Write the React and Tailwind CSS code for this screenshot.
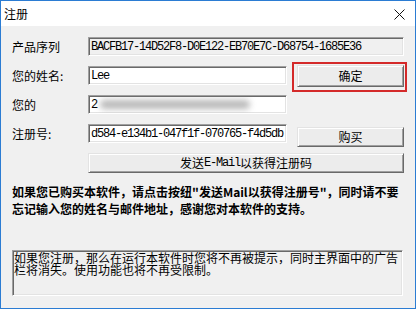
import React from "react";

const cjk = { fontFamily: '"Noto Sans CJK SC", "Noto Sans", sans-serif' };
const mono = { fontFamily: '"Liberation Mono", "Noto Sans CJK SC", monospace' };

function Sunken({ className = "", children }) {
  return (
    <div
      className={
        "h-[19px] box-border border border-t-[#a0a0a0] border-l-[#a0a0a0] border-b-white border-r-white shadow-[inset_1px_1px_0_#696969,inset_-1px_-1px_0_#e3e3e3] flex items-center pl-[2px] overflow-hidden text-[12px] tracking-[-1.2px] text-black " +
        className
      }
      style={mono}
    >
      {children}
    </div>
  );
}

function Raised({ className = "", children }) {
  return (
    <div
      className={
        "box-border border border-t-[#e3e3e3] border-l-[#e3e3e3] border-b-[#696969] border-r-[#696969] shadow-[inset_1px_1px_0_#ffffff,inset_-1px_-1px_0_#a0a0a0] bg-[#ececec] flex items-center justify-center text-[12px] text-black " +
        className
      }
      style={cjk}
    >
      {children}
    </div>
  );
}

function Label({ children }) {
  return (
    <div className="w-[76px] shrink-0 text-[12px] leading-[19px] text-black" style={cjk}>
      {children}
    </div>
  );
}

export default function App() {
  return (
    <div className="w-[416px] h-[309px] box-border border border-[#2b7cd3] flex flex-col bg-[#f0f0f0] overflow-hidden">
      <div className="h-[25px] bg-white flex items-center justify-between pl-[3px] pr-[10px] shrink-0">
        <span className="text-[12px] text-black" style={cjk}>注册</span>
        <svg width="11" height="11" viewBox="0 0 11 11" className="mt-[1px]">
          <path d="M0.5 0.5 L10.5 10.5 M10.5 0.5 L0.5 10.5" stroke="#111" strokeWidth="1" fill="none" />
        </svg>
      </div>
      <div className="flex-1 flex flex-col pl-[11px] pr-[11px] pt-[11px]">
        <div className="flex items-center h-[19px]">
          <Label>产品序列</Label>
          <Sunken className="w-[316px] bg-[#f0f0f0]">BACFB17-14D52F8-D0E122-EB70E7C-D68754-1685E36</Sunken>
        </div>
        <div className="flex items-center h-[19px] mt-[10px]">
          <Label>您的姓名:</Label>
          <Sunken className="w-[199px] bg-white">Lee</Sunken>
          <div className="relative ml-[10px]">
            <Raised className="w-[107px] h-[22px]">确定</Raised>
            <div className="absolute left-[-5px] top-[-3px] w-[115px] h-[30px] border-2 border-[#d42a2a] pointer-events-none" />
          </div>
        </div>
        <div className="flex items-center h-[19px] mt-[10px]">
          <Label>您的</Label>
          <Sunken className="w-[199px] bg-white">
            <span>2</span>
            <span className="ml-[3px] w-[150px] h-[9px] bg-[#9a9a9a] blur-[3px] opacity-70 rounded-full" />
          </Sunken>
        </div>
        <div className="flex items-start h-[19px] mt-[10px]">
          <Label>注册号:</Label>
          <Sunken className="w-[199px] bg-white">d584-e134b1-047f1f-070765-f4d5db</Sunken>
          <Raised className="w-[107px] h-[20px] ml-[10px] mt-[3px]">购买</Raised>
        </div>
        <Raised className="ml-[76px] w-[316px] h-[20px] mt-[10px]">
          <span>发送</span>
          <span style={mono} className="tracking-[-1.2px]">E-Mail</span>
          <span>以获得注册码</span>
        </Raised>
        <div className="mt-[10px] text-[12px] leading-[17px] font-bold text-black" style={cjk}>
          如果您已购买本软件，请点击按纽"发送Mail以获得注册号"，同时请不要忘记输入您的姓名与邮件地址，感谢您对本软件的支持。
        </div>
        <div
          className="mt-[33px] w-[391px] h-[46px] box-border border border-t-[#a0a0a0] border-l-[#a0a0a0] border-b-white border-r-white shadow-[inset_1px_1px_0_#696969,inset_-1px_-1px_0_#e3e3e3] pl-[1px] pt-[1px] text-[12px] leading-[12px] text-black"
          style={cjk}
        >
          如果您注册，那么在运行本软件时您将不再被提示，同时主界面中的广告栏将消失。使用功能也将不再受限制。
        </div>
      </div>
    </div>
  );
}
